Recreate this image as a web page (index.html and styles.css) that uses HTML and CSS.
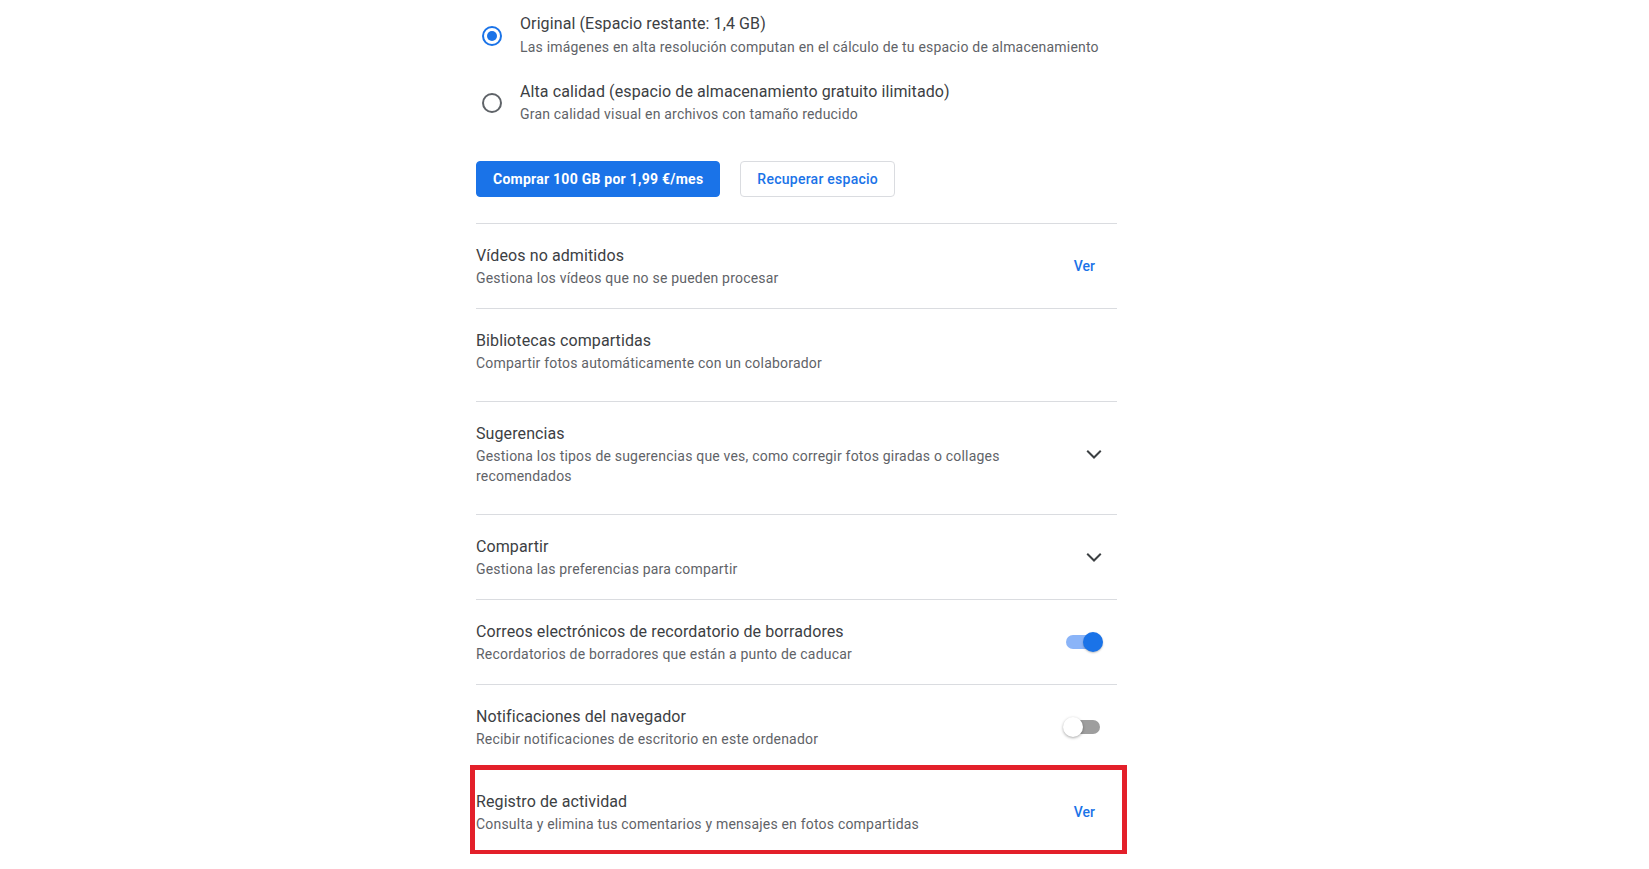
FILE: index.html
```html
<!DOCTYPE html>
<html lang="es">
<head>
<meta charset="utf-8">
<title>Ajustes</title>
<link rel="stylesheet" href="styles.css">
</head>
<body>
<main class="settings">
  <section class="storage">
    <div class="option">
      <span class="radio radio--checked"><span class="radio-dot"></span></span>
      <div class="text">
        <div class="title">Original (Espacio restante: 1,4 GB)</div>
        <div class="sub">Las imágenes en alta resolución computan en el cálculo de tu espacio de almacenamiento</div>
      </div>
    </div>
    <div class="option option--second">
      <span class="radio"></span>
      <div class="text">
        <div class="title">Alta calidad (espacio de almacenamiento gratuito ilimitado)</div>
        <div class="sub">Gran calidad visual en archivos con tamaño reducido</div>
      </div>
    </div>
    <div class="actions">
      <button class="btn btn--primary">Comprar 100 GB por 1,99 €/mes</button>
      <button class="btn btn--outline">Recuperar espacio</button>
    </div>
  </section>

  <div class="row">
    <div class="text">
      <div class="title">Vídeos no admitidos</div>
      <div class="sub">Gestiona los vídeos que no se pueden procesar</div>
    </div>
    <a class="link">Ver</a>
  </div>

  <div class="row row--tall">
    <div class="text">
      <div class="title">Bibliotecas compartidas</div>
      <div class="sub">Compartir fotos automáticamente con un colaborador</div>
    </div>
  </div>

  <div class="row row--tall">
    <div class="text">
      <div class="title">Sugerencias</div>
      <div class="sub">Gestiona los tipos de sugerencias que ves, como corregir fotos giradas o collages recomendados</div>
    </div>
    <svg class="chevron" viewBox="0 0 24 24" width="28" height="28"><polyline points="6.2,9.2 12,15 17.8,9.2"/></svg>
  </div>

  <div class="row">
    <div class="text">
      <div class="title">Compartir</div>
      <div class="sub">Gestiona las preferencias para compartir</div>
    </div>
    <svg class="chevron" viewBox="0 0 24 24" width="28" height="28"><polyline points="6.2,9.2 12,15 17.8,9.2"/></svg>
  </div>

  <div class="row">
    <div class="text">
      <div class="title">Correos electrónicos de recordatorio de borradores</div>
      <div class="sub">Recordatorios de borradores que están a punto de caducar</div>
    </div>
    <span class="toggle toggle--on"><span class="track"></span><span class="thumb"></span></span>
  </div>

  <div class="row">
    <div class="text">
      <div class="title">Notificaciones del navegador</div>
      <div class="sub">Recibir notificaciones de escritorio en este ordenador</div>
    </div>
    <span class="toggle"><span class="track"></span><span class="thumb"></span></span>
  </div>

  <div class="row row--highlight">
    <div class="text">
      <div class="title">Registro de actividad</div>
      <div class="sub">Consulta y elimina tus comentarios y mensajes en fotos compartidas</div>
    </div>
    <a class="link">Ver</a>
    <span class="highlight"></span>
  </div>
</main>
</body>
</html>
```

FILE: styles.css
```css
html, body {
  margin: 0;
  padding: 0;
  background: #ffffff;
}

body {
  font-family: Roboto, "Liberation Sans", Arial, sans-serif;
  color: #3c4043;
}

.settings {
  width: 641px;
  margin-left: 476px;
  padding-top: 12px;
}

.storage {
  display: flex;
  flex-direction: column;
}

.option {
  display: flex;
  align-items: center;
  margin-bottom: 22px;
}

.option .title {
  margin-bottom: 1px;
}

.option--second {
  margin-top: 1px;
}

.option--second .title {
  margin-bottom: 0;
}

.radio {
  box-sizing: border-box;
  width: 20px;
  height: 20px;
  margin: 2px 18px 0 6px;
  border: 2px solid #5f6368;
  border-radius: 50%;
  display: flex;
  align-items: center;
  justify-content: center;
  flex: none;
}

.radio--checked {
  border-color: #1a73e8;
}

.radio-dot {
  width: 10px;
  height: 10px;
  border-radius: 50%;
  background: #1a73e8;
}

.title {
  font-size: 16px;
  line-height: 24px;
  letter-spacing: 0.1px;
  color: #3c4043;
}

.sub {
  font-size: 14px;
  line-height: 20px;
  letter-spacing: 0.2px;
  color: #5f6368;
}

.actions {
  display: flex;
  gap: 20px;
  margin-top: 15px;
  margin-bottom: 26px;
}

.btn {
  box-sizing: border-box;
  height: 36px;
  border-radius: 4px;
  font-family: Roboto, "Liberation Sans", Arial, sans-serif;
  font-size: 14px;
  font-weight: 500;
  letter-spacing: 0.25px;
  cursor: pointer;
}

.btn--primary {
  padding: 0 16px;
  background: #1a73e8;
  color: #ffffff;
  border: 1px solid #1a73e8;
  font-weight: 700;
}

.btn--outline {
  padding: 0 16px;
  background: #ffffff;
  color: #1a73e8;
  border: 1px solid #dadce0;
}

.row {
  position: relative;
  display: flex;
  align-items: center;
  border-top: 1px solid #dadce0;
  padding: 20px 0 20px;
}

.row--tall {
  padding-bottom: 28px;
}

.row .text {
  flex: 1;
  max-width: 560px;
}

.row .text + * {
  margin-left: auto;
}

.link {
  color: #1a73e8;
  font-size: 14px;
  font-weight: 500;
  margin-right: 22px;
  cursor: pointer;
}

.chevron {
  fill: none;
  stroke: #3c4043;
  stroke-width: 1.7;
  margin-right: 9px;
}

.toggle {
  position: relative;
  width: 40px;
  height: 20px;
  margin-right: 14px;
  flex: none;
}

.track {
  position: absolute;
  left: 3px;
  right: 3px;
  top: 3px;
  height: 14px;
  border-radius: 7px;
  background: #9e9e9e;
}

.thumb {
  position: absolute;
  top: 0;
  left: 0;
  width: 20px;
  height: 20px;
  border-radius: 50%;
  background: #ffffff;
  box-shadow: 0 1px 3px rgba(0, 0, 0, 0.35);
}

.toggle--on .track {
  background: #8ab4f8;
}

.toggle--on .thumb {
  left: auto;
  right: 0;
  background: #1a73e8;
  box-shadow: 0 1px 2px rgba(0, 0, 0, 0.25);
}

.highlight {
  position: absolute;
  left: -6px;
  right: -10px;
  top: -5px;
  bottom: -1px;
  border: 5px solid #e3202a;
  pointer-events: none;
}
```
